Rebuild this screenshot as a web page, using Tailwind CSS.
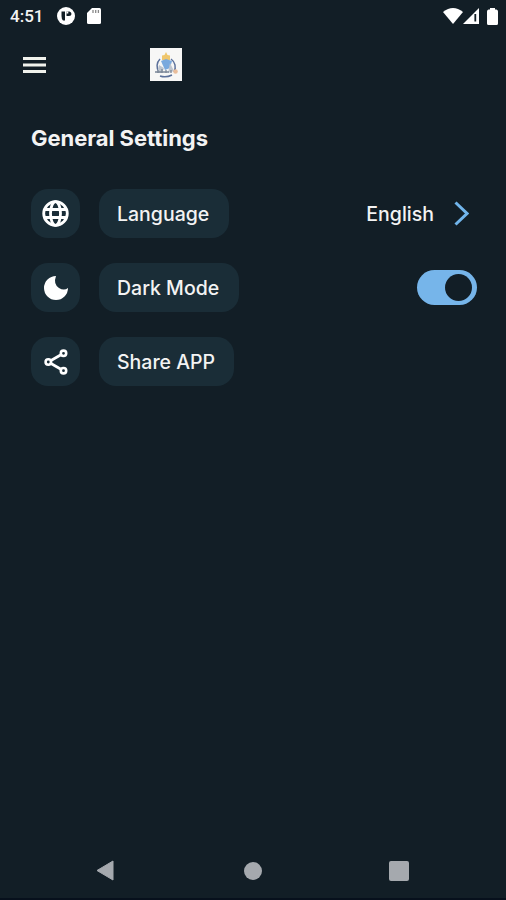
<!DOCTYPE html>
<html lang="en">
<head>
<meta charset="utf-8">
<title>General Settings</title>
<script src="https://cdn.jsdelivr.net/npm/@tailwindcss/browser@4"></script>
</head>
<body class="bg-[#121e26]">
<div class="flex h-[900px] w-[506px] flex-col overflow-hidden border-b-2 border-[#07101c] bg-[#121e26] font-['Inter',sans-serif] text-[#f3f3f3]">
  <header class="flex h-8 shrink-0 items-center pl-[10px] pr-2">
    <span class="w-[47px] whitespace-nowrap font-['Roboto',sans-serif] text-[17px] font-medium leading-8">4:51</span>
    <svg class="h-[18px] w-[18px]" viewBox="0 0 18 18"><circle cx="9" cy="9" r="9" fill="#fff"/><path d="M4.500 4.500h3.500v9H6Q4.500 12 4.500 9zM9.500 4.500h3q2 .5 2 2.500T12 9h-2.500z" fill="#121e26"/><path d="M9.500 4.500h1.800v2H9.500z" fill="#fff"/></svg>
    <svg class="ml-3 h-4 w-[14px]" viewBox="0 0 14 16"><path d="M5 0h7.500Q14 0 14 1.500v13q0 1.500-1.500 1.500h-11Q0 16 0 14.500V5z" fill="#fff"/><path d="M6 2v3M8.700 2v3M11.400 2v3" stroke="#888" stroke-width="1.300"/></svg>
    <svg class="ml-auto h-4 w-5" viewBox="0 0 20 16"><path d="M0 4Q10-4 20 4L10 16z" fill="#fff"/></svg>
    <svg class="h-4 w-4" viewBox="0 0 16 16"><path d="M16 0v16H0z" fill="#fff"/><path d="M12.300 6v7.500" stroke="#121e26" stroke-width="1.800"/></svg>
    <svg class="ml-2 h-[17px] w-[11px]" viewBox="0 0 11 17"><path d="M3 0h5v1.500H9.500Q11 2 11 3.500v12Q11 17 9.500 17h-8Q0 17 0 15.500v-12Q0 2 1.500 1.500H3z" fill="#fff"/></svg>
  </header>
  <nav class="flex h-16 shrink-0 items-center pl-[23px]">
    <svg class="mt-px h-[18px] w-[23px]" viewBox="0 0 23 18"><path d="M0 2.500h23M0 9h23M0 15.500h23" stroke="#f0f2ec" stroke-width="3"/></svg>
    <svg class="ml-[104px] h-[33px] w-[32px]" viewBox="0 0 32 33"><path d="M0 0h32v33H0z" fill="#f7f7f6"/><path d="M9 24A10 10 0 0 1 10 11M21 11a10 10 0 0 1 3 13M10 28q6 2 12-1" fill="none" stroke="#5c719b" stroke-width="1.500"/><path d="M12 12V7.500l2.500-.5 1.500-3 1.500 3 2.500.5V12z" fill="#efc66c"/><path d="M11 13l5-2 6 2-2 7-5 2z" fill="#79a9de"/><path d="M9 17l5 3-2 5H7zM20 15l4 8-6 2z" fill="#bec5cf"/><path d="M5 24h14M8 22v3m4-4v4m4-3v3m5-3v3" stroke="#7b8798" stroke-width="1.300"/><circle cx="25.500" cy="23.500" r="2.300" fill="#e9bd9b"/></svg>
  </nav>
  <main class="flex flex-1 flex-col pl-[31px] pr-[29px] pt-[26px]">
    <h1 class="h-8 whitespace-nowrap text-[22px] font-bold leading-8 tracking-[-0.05px]">General Settings</h1>
    <div class="mt-[35px] flex flex-col gap-[25px]">
      <div class="flex h-[49px] items-center">
        <div class="flex h-[49px] w-[49px] items-center justify-center rounded-[17px] bg-[#1a2d37]"><svg class="h-[27px] w-[27px]" viewBox="0 0 27 27" fill="none" stroke="#fff" stroke-width="2.800"><circle cx="13.500" cy="13.500" r="11.800"/><ellipse cx="13.500" cy="13.500" rx="5" ry="11.800"/><path d="M2.500 9.500h22M2.500 17.500h22"/></svg></div>
        <div class="ml-[19px] flex h-[49px] w-[130px] items-center rounded-[17px] bg-[#1a2d37] pl-[18px] pt-0.5"><span class="whitespace-nowrap text-[19.5px] font-medium">Language</span></div>
        <span class="ml-auto whitespace-nowrap pt-0.5 text-[19.5px] font-medium">English</span>
        <svg class="ml-5 mr-2 h-[25px] w-[15px]" viewBox="0 0 15 25"><path d="M1.500 1.500l11.500 11-11.500 11" fill="none" stroke="#71b5eb" stroke-width="3"/></svg>
      </div>
      <div class="flex h-[49px] items-center">
        <div class="flex h-[49px] w-[49px] items-center justify-center rounded-[17px] bg-[#1a2d37]"><svg class="h-6 w-6" viewBox="0 0 24 24"><path d="M12 0A12 12 0 1 0 24 12Q20 15 15 12Q9 8 12 0z" fill="#fff"/></svg></div>
        <div class="ml-[19px] flex h-[49px] w-[140px] items-center rounded-[17px] bg-[#1a2d37] pl-[18px] pt-0.5"><span class="whitespace-nowrap text-[19.5px] font-medium">Dark Mode</span></div>
        <div class="ml-auto flex h-[35px] w-[60px] items-center justify-end rounded-full bg-[#76b5ea] pr-[5px]"><div class="h-[27px] w-[27px] rounded-full bg-[#121e26]"></div></div>
      </div>
      <div class="flex h-[49px] items-center">
        <div class="flex h-[49px] w-[49px] items-center justify-center rounded-[17px] bg-[#1a2d37]"><svg class="h-[26px] w-6" viewBox="0 0 24 26" fill="none" stroke="#fff" stroke-width="2.600"><path d="M7 11.500l9.500-5.500M7 14.500l9.500 5.500"/><circle cx="4.300" cy="13" r="2.700"/><circle cx="19.500" cy="4.300" r="2.700"/><circle cx="19.500" cy="21.700" r="2.700"/></svg></div>
        <div class="ml-[19px] flex h-[49px] w-[135px] items-center rounded-[17px] bg-[#1a2d37] pl-[18px] pt-0.5"><span class="whitespace-nowrap text-[19.5px] font-medium">Share APP</span></div>
      </div>
    </div>
  </main>
  <footer class="flex h-14 shrink-0 items-center pl-24 pr-[97px] pt-px">
    <svg class="h-[21px] w-[18px]" viewBox="0 0 18 21"><path d="M1 10.500L17 1v19z" fill="#a5a9ae" stroke="#a5a9ae" stroke-linejoin="round"/></svg>
    <div class="ml-[130px] h-[18px] w-[18px] rounded-full bg-[#a5a9ae]"></div>
    <div class="ml-auto h-5 w-5 rounded-[2px] bg-[#a5a9ae]"></div>
  </footer>
</div>
</body>
</html>
